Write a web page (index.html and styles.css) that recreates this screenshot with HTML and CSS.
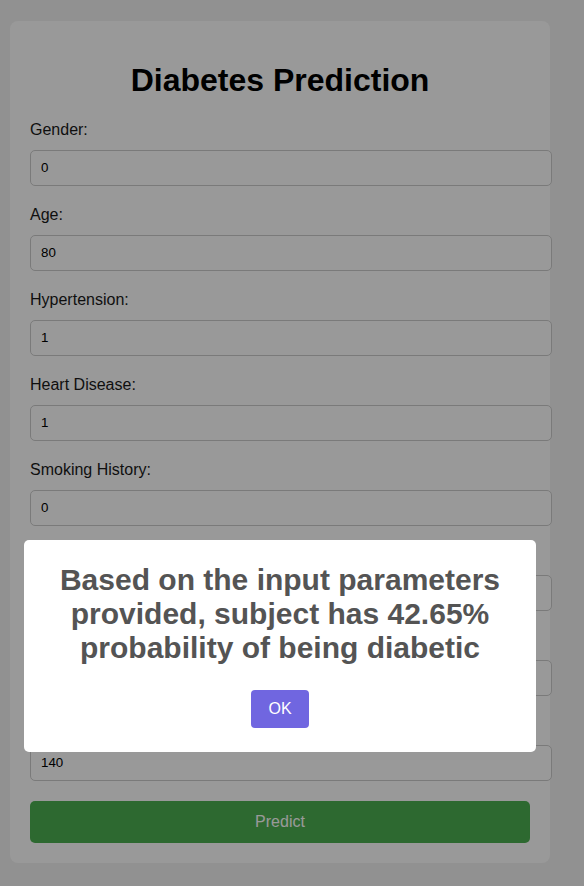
FILE: index.html
```html
<!DOCTYPE html>
<html>
<head>
<meta charset="utf-8">
<title>Diabetes Prediction</title>
<link rel="stylesheet" href="styles.css">
</head>
<body>
<div class="container">
  <h1>Diabetes Prediction</h1>
  <form class="form">
    <label>Gender:</label>
    <input type="text" value="0">
    <label>Age:</label>
    <input type="text" value="80">
    <label>Hypertension:</label>
    <input type="text" value="1">
    <label>Heart Disease:</label>
    <input type="text" value="1">
    <label>Smoking History:</label>
    <input type="text" value="0">
    <label>BMI:</label>
    <input type="text" value="25.19">
    <label>HbA1c Level:</label>
    <input type="text" value="6.6">
    <label>Blood Glucose Level:</label>
    <input type="text" value="140">
    <button type="button" class="predict">Predict</button>
  </form>
</div>
<div class="overlay">
  <div class="popup">
    <h2 class="popup-title">Based on the input parameters provided, subject has 42.65% probability of being diabetic</h2>
    <div class="actions">
      <button type="button" class="confirm">OK</button>
    </div>
  </div>
</div>
</body>
</html>
```

FILE: styles.css
```css
html, body {
  margin: 0;
  height: 100%;
  overflow: hidden;
}
body {
  background: #f2f2f2;
  font-family: "Liberation Sans", Arial, sans-serif;
  padding: 21px 10px 0;
  box-sizing: border-box;
}
.container {
  width: 500px;
  padding: 20px;
  background: #fff;
  border-radius: 8px;
}
h1 {
  font-size: 32px;
  text-align: center;
  color: #000;
  margin: 21.44px 0;
}
.form label {
  display: block;
  font-size: 16px;
  line-height: 18px;
  color: #1a1a1a;
  margin-bottom: 11px;
}
.form input {
  display: block;
  width: 100%;
  padding: 0 10px;
  box-sizing: content-box;
  height: 34px;
  border: 1px solid #ccc;
  border-radius: 5px;
  font-family: "Liberation Sans", Arial, sans-serif;
  font-size: 13.333px;
  color: #000;
  background: #fff;
  margin: 0 0 20px;
}
.predict {
  display: block;
  width: 100%;
  padding: 12px;
  border: none;
  border-radius: 5px;
  background: #4caf50;
  color: #fff;
  font-family: "Liberation Sans", Arial, sans-serif;
  font-size: 16px;
}
.overlay {
  position: fixed;
  inset: 0;
  background: rgba(0, 0, 0, 0.4);
}
.popup {
  position: absolute;
  left: 24px;
  top: 540px;
  width: 512px;
  box-sizing: border-box;
  background: #fff;
  border-radius: 5px;
  padding: 0 0 19px;
  text-align: center;
}
.popup-title {
  margin: 0;
  padding: 23px 30px 0;
  font-size: 30px;
  font-weight: 600;
  color: #545454;
  line-height: normal;
}
.actions {
  display: flex;
  justify-content: center;
  margin-top: 20px;
}
.confirm {
  margin: 5px;
  padding: 10px 17.6px;
  border: none;
  border-radius: 4px;
  background: #7066e0;
  color: #fff;
  font-family: "Liberation Sans", Arial, sans-serif;
  font-size: 16px;
  line-height: normal;
}
```
